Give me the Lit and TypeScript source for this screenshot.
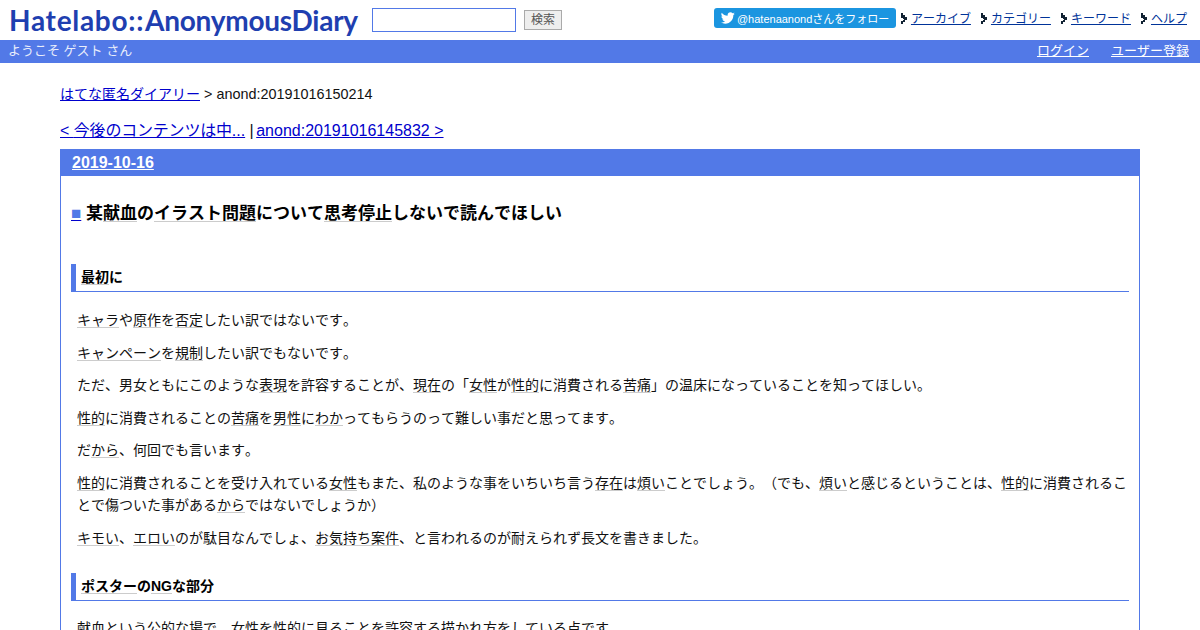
import { LitElement, html, css } from "lit";
import { customElement } from "lit/decorators.js";

const k = (t: string) => html`<span class="k">${t}</span>`;

@customElement("app-root")
export class AppRoot extends LitElement {
  static styles = css`
    :host { display: block; font-family: "Liberation Sans", "Noto Sans CJK JP", sans-serif; color: #111; height: 630px; overflow: hidden; background: #fff; font-size: 14px; text-spacing-trim: space-all; font-kerning: none; }
    a { color: #00c; }
    .top { display: flex; height: 40px; align-items: flex-start; }
    .logo { margin: 3px 0 0 9px; width: 349px; font: 700 28px/34px "Lato", sans-serif; color: #1f3fb0; white-space: nowrap; text-decoration: none; }
    .logo .l1 { letter-spacing: 0.7px; }
    .logo .l2 { letter-spacing: -0.25px; margin-left: 1px; }
    .search { margin: 8px 0 0 14px; width: 144px; height: 24px; box-sizing: border-box; border: 1px solid #5279e7; background: #fff; }
    .btn { margin: 10px 0 0 8px; width: 38px; height: 20px; box-sizing: border-box; border: 1px solid #aaa; background: #eee; color: #555; font-size: 12px; line-height: 18px; text-align: center; }
    .right { margin-left: auto; display: flex; align-items: center; padding: 8px 13px 0 0; font-size: 12px; }
    .tw { display: flex; align-items: center; gap: 2px; background: #1b95e0; color: #fff; height: 20px; width: 182px; box-sizing: border-box; padding: 0 0 0 7px; border-radius: 3px; font-size: 11px; margin-right: 5px; white-space: nowrap; }
    .tw svg { width: 14px; height: 14px; fill: #fff; }
    .nav { display: flex; align-items: center; height: 20px; margin-right: 10px; }
    .nav:last-child { margin-right: 0; }
    .nav a { color: #039; padding-bottom: 2px; }
    .arrow { width: 7px; height: 11px; margin-right: 3px; }
    .bar { display: flex; justify-content: space-between; background: #5279e7; color: #e8edfb; height: 23px; line-height: 22px; padding: 0 11px 0 8px; font-size: 13px; }
    .bar .r { display: flex; gap: 22px; }
    .bar a { color: #fff; }
    main { padding: 0 60px; }
    .crumb { margin: 0; padding-top: 22px; line-height: 18px; font-size: 14.4px; }
    .crumb a { font-size: 14px; }
    .pager { margin-top: 18px; line-height: 20px; font-size: 16px; }
    .pager .cj { letter-spacing: -0.2px; }
    .pager .sep { margin: 0 -2px 0 0; }
    .day { margin-top: 8px; border: 1px solid #5279e7; border-top: 0; padding: 0 10px 0; height: 481px; }
    .dayh { margin: 0 -10px; background: #5279e7; height: 27px; line-height: 27px; padding-left: 11px; font-size: 16px; font-weight: 700; }
    .dayh a { color: #fff; }
    h3 { margin: 26px 0 0; font-size: 17px; line-height: 24px; font-weight: 700; color: #000; }
    h3 .sq { color: #5279e7; font-weight: 700; text-decoration: underline; text-decoration-color: #00c; }
    h4 { margin: 0; font-size: 14px; line-height: 26px; height: 28px; box-sizing: border-box; border-left: 5px solid #5279e7; border-bottom: 1px solid #5279e7; padding-left: 5px; font-weight: 700; color: #000; }
    h4.a { margin-top: 38px; }
    h4.b { margin-top: 24px; }
    .k { text-decoration: underline 1px #ccc; text-underline-offset: 2px; text-decoration-skip-ink: none; }
    p { margin: 10px 0 0 6px; line-height: 22.5px; }
    h4 + p { margin-top: 17px; }
    h4.b + p { margin-top: 16px; }
  `;

  render() {
    return html`
      <div class="top">
        <a class="logo"><span class="l1">Hatelabo::</span><span class="l2">AnonymousDiary</span></a>
        <div class="search"></div>
        <div class="btn">検索</div>
        <div class="right">
          <div class="tw">
            <svg viewBox="0 0 24 24"><path d="M23.6 4.6c-.9.4-1.8.7-2.8.8 1-.6 1.8-1.6 2.2-2.7-1 .6-2 1-3.1 1.2C18.9 2.9 17.6 2.300 16.200 2.300c-2.700 0-4.900 2.200-4.900 4.900 0 .4 0 .8.1 1.100C7.300 8.100 3.700 6.100 1.300 3.100c-.4.700-.7 1.600-.7 2.500 0 1.700.9 3.200 2.200 4.100-.8 0-1.600-.2-2.200-.6v.1c0 2.400 1.700 4.400 3.900 4.800-.4.100-.8.200-1.300.2-.3 0-.6 0-.9-.1.600 2 2.400 3.400 4.600 3.400-1.700 1.300-3.800 2.100-6.100 2.100-.4 0-.8 0-1.200-.1 2.200 1.400 4.800 2.200 7.500 2.200 9.100 0 14-7.500 14-14v-.6c1-.7 1.800-1.600 2.500-2.500z"/></svg>
            <span>@hatenaanondさんをフォロー</span>
          </div>
          ${["アーカイブ", "カテゴリー", "キーワード", "ヘルプ"].map(
            (t) => html`<div class="nav"><svg class="arrow" viewBox="1 0 7 11"><path d="M1 0h2v2h2v2h2v3h-2v2h-2v2h-2v-3h2v-1h1v-1h-1v-1h-2z" fill="#123"/></svg><a href="#">${t}</a></div>`
          )}
        </div>
      </div>
      <div class="bar">
        <span>ようこそ ゲスト さん</span>
        <div class="r"><a href="#">ログイン</a><a href="#">ユーザー登録</a></div>
      </div>
      <main>
        <div class="crumb"><a href="#">はてな匿名ダイアリー</a> &gt; anond:20191016150214</div>
        <div class="pager"><a href="#">&lt; <span class="cj">今後のコンテンツは中</span>...</a> <span class="sep">|</span> <a href="#">anond:20191016145832 &gt;</a></div>
        <div class="day">
          <div class="dayh"><a href="#">2019-10-16</a></div>
          <h3><span class="sq">■</span> 某${k("献血")}の${k("イラスト")}${k("問題")}について${k("思考停止")}しないで読んでほしい</h3>
          <h4 class="a">${k("最初")}に</h4>
          <p>${k("キャラ")}や${k("原作")}を${k("否定")}したい訳ではないです。</p>
          <p>${k("キャンペーン")}を${k("規制")}したい訳でもないです。</p>
          <p>ただ、男女ともにこのような${k("表現")}を許容することが、${k("現在")}の「${k("女性")}が${k("性的")}に消費される${k("苦痛")}」の温床になっていることを知ってほしい。</p>
          <p>${k("性的")}に消費されることの${k("苦痛")}を${k("男性")}に${k("わか")}ってもらうのって難しい事だと思ってます。</p>
          <p>だ${k("から")}、何回でも言います。</p>
          <p>${k("性的")}に消費されることを受け入れている${k("女性")}もまた、私のような事をいちいち言う${k("存在")}は${k("煩い")}ことでしょう。（でも、${k("煩い")}と感じるということは、${k("性的")}に消費されることで傷ついた事がある${k("から")}ではないでしょうか）</p>
          <p>${k("キモい")}、${k("エロい")}のが駄目なんでしょ、${k("お気持ち")}${k("案件")}、と言われるのが耐えられず長文を書きました。</p>
          <h4 class="b">${k("ポスター")}の${k("NG")}な部分</h4>
          <p>${k("献血")}という公的な場で、${k("女性")}を${k("性的")}に見ることを許容する描かれ方をしている点です。</p>
        </div>
      </main>
    `;
  }
}
